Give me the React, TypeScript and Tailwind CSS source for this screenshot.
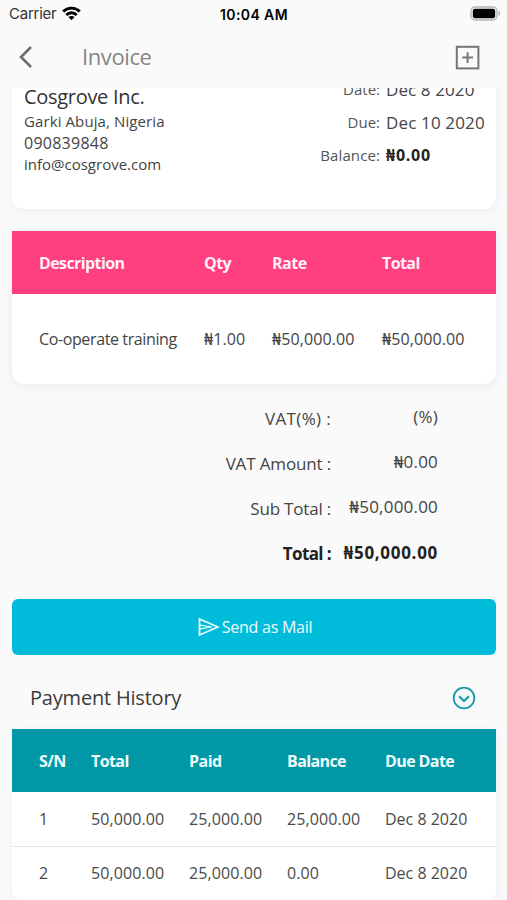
const items = [
  { description: "Co-operate training", qty: "₦1.00", rate: "₦50,000.00", total: "₦50,000.00" },
];

const summary = [
  { label: "VAT(%) :", value: "(%)", labelClass: "tracking-[0.35px]" },
  { label: "VAT Amount :", value: "₦0.00", labelClass: "tracking-[-0.15px]" },
  { label: "Sub Total :", value: "₦50,000.00", labelClass: "tracking-[-0.2px]" },
];

const payments = [
  { sn: 1, total: "50,000.00", paid: "25,000.00", balance: "25,000.00", due: "Dec 8 2020" },
  { sn: 2, total: "50,000.00", paid: "25,000.00", balance: "0.00", due: "Dec 8 2020" },
];

function StatusBar() {
  return (
    <div className="flex h-7 items-center justify-between pl-[9px] pr-[6px] font-['Inter',sans-serif] text-black">
      <div className="flex w-[120px] items-center gap-[6px]">
        <span className="text-[15px] tracking-[-0.25px] text-[#333]">Carrier</span>
        <svg className="-mt-[2px]" width="19" height="15" viewBox="0 0 19 15" fill="none" stroke="#000" strokeWidth="2.8">
          <path d="M1.2 5.6C5.8 0.9 13.2 0.9 17.8 5.6" />
          <path d="M4.3 8.9C7.2 6 11.8 6 14.7 8.9" />
          <path d="M9.5 14.2L6.4 11.1C8.1 9.5 10.9 9.5 12.6 11.1Z" fill="#000" stroke="none" />
        </svg>
      </div>
      <span className="mr-[2px] text-[14px] font-semibold tracking-[0.4px]">10:04 AM</span>
      <div className="flex w-[120px] justify-end pb-[2px]">
        <svg width="31" height="15" viewBox="0 0 31 15" fill="none">
          <rect x="1" y="1" width="26" height="13" rx="4" stroke="#b5b5b5" strokeWidth="1.4" />
          <rect x="2.8" y="2.8" width="22.4" height="9.4" rx="2" fill="#000" />
          <path d="M28.7 5.3C30.8 6 30.8 9 28.7 9.7Z" fill="#aaa" />
        </svg>
      </div>
    </div>
  );
}

function Header() {
  return (
    <header className="flex h-[60px] items-center pb-[2px] pl-[18px] pr-[27px] text-[#858585]">
      <svg width="16" height="24" viewBox="0 0 16 24" fill="none" stroke="#6e6e6e" strokeWidth="2.6">
        <path d="M13 2L3 12L13 22" />
      </svg>
      <h1 className="ml-12 flex-1 pb-[2px] text-[22px] leading-none tracking-[-0.4px]">Invoice</h1>
      <svg width="25" height="25" viewBox="0 0 25 25" fill="none" stroke="#757575" strokeWidth="2">
        <rect x="1.8" y="1.8" width="21.6" height="21.6" />
        <path d="M12.6 7.2V18M7.2 12.6H18" />
      </svg>
    </header>
  );
}

function ClientCard() {
  return (
    <section className="-mt-10 flex h-[161px] justify-between rounded-xl bg-white px-3 shadow-[0_2px_10px_rgba(90,120,140,0.09)]">
      <div className="pt-[34px] text-[15px] leading-[21px] text-[#444]">
        <h2 className="text-[20px] leading-[29px] tracking-[-0.3px] text-[#333]">Cosgrove Inc.</h2>
        <p className="tracking-[0.1px]">Garki Abuja, Nigeria</p>
        <p className="pt-px text-[16px] tracking-[0.25px]">090839848</p>
        <p>info@cosgrove.com</p>
      </div>
      <dl className="grid grid-cols-[auto_98px] content-start gap-x-[6px] pt-[25px] text-right leading-[33px]">
        <dt className="text-[15px] text-[#555]">Date:</dt>
        <dd className="text-left text-[17px] tracking-[0.1px] text-[#444]">Dec 8 2020</dd>
        <dt className="text-[15px] text-[#555]">Due:</dt>
        <dd className="text-left text-[17px] tracking-[0.15px] text-[#444]">Dec 10 2020</dd>
        <dt className="text-[15px] tracking-[0.1px] text-[#555]">Balance:</dt>
        <dd className="text-left text-[16px] font-bold tracking-[0.75px] text-[#222]">₦0.00</dd>
      </dl>
    </section>
  );
}

function ItemsTable() {
  return (
    <section className="mt-[22px] overflow-hidden rounded-b-xl bg-white text-[16px] shadow-[0_2px_10px_rgba(90,120,140,0.11)]">
      <div className="grid h-[63px] grid-cols-[165px_68px_110px_1fr] items-center bg-[#ff3f80] pl-[27px] font-bold tracking-[-0.6px] text-[#fff0f5]">
        <span>Description</span>
        <span>Qty</span>
        <span className="tracking-[-0.5px]">Rate</span>
        <span>Total</span>
      </div>
      {items.map((item) => (
        <div
          key={item.description}
          className="grid h-[90px] grid-cols-[165px_68px_110px_1fr] items-center pl-[27px] tracking-[0.1px] text-[#444]"
        >
          <span className="tracking-[-0.38px]">{item.description}</span>
          <span>{item.qty}</span>
          <span>{item.rate}</span>
          <span>{item.total}</span>
        </div>
      ))}
    </section>
  );
}

function Summary() {
  return (
    <section className="mt-[11px] pr-[58px] text-[17px] text-[#444]">
      {summary.map((row) => (
        <div key={row.label} className="flex h-[45px] items-center justify-end">
          <span className={`pt-[2px] ${row.labelClass}`}>{row.label}</span>
          <span className="w-[107px] pb-px text-right tracking-[0.2px]">{row.value}</span>
        </div>
      ))}
      <div className="flex h-[45px] items-center justify-end font-bold text-[#222]">
        <span className="pt-[2px] tracking-[-0.6px]">Total :</span>
        <span className="w-[107px] text-right tracking-[0.7px]">₦50,000.00</span>
      </div>
    </section>
  );
}

function PaymentHistory() {
  return (
    <section>
      <div className="flex h-[74px] items-center justify-between pb-[1px] pl-[18px] pr-5 pt-[12px]">
        <h2 className="text-[20px] tracking-[-0.2px] text-[#3c3c3c]">Payment History</h2>
        <svg width="24" height="24" viewBox="0 0 24 24" fill="none" stroke="#1398aa" strokeWidth="1.8">
          <circle cx="12" cy="12" r="10.3" />
          <path d="M7 10.2L12 15L17 10.2" strokeWidth="2" />
        </svg>
      </div>
      <div className="overflow-hidden rounded-b-xl bg-white text-[16px] shadow-[0_2px_10px_rgba(90,120,140,0.09)]">
        <div className="grid h-[63px] grid-cols-[52px_98px_98px_98px_1fr] items-center bg-[#0097a7] pl-[27px] font-bold tracking-[-0.6px] text-[#effcfd]">
          <span>S/N</span>
          <span>Total</span>
          <span className="tracking-[-0.5px]">Paid</span>
          <span>Balance</span>
          <span>Due Date</span>
        </div>
        {payments.map((payment) => (
          <div
            key={payment.sn}
            className="grid h-[55px] grid-cols-[52px_98px_98px_98px_1fr] items-center border-b border-[#e4e4e4] pl-[27px] tracking-[0.1px] text-[#4a4a4a] last:border-b-0 last:pb-[3px]"
          >
            <span>{payment.sn}</span>
            <span>{payment.total}</span>
            <span>{payment.paid}</span>
            <span>{payment.balance}</span>
            <span className="tracking-normal">{payment.due}</span>
          </div>
        ))}
      </div>
    </section>
  );
}

export default function App() {
  return (
    <div className="flex h-[900px] w-[507px] flex-col overflow-hidden bg-[#fafafa] font-['Open_Sans','Noto_Sans',sans-serif] whitespace-nowrap">
      <StatusBar />
      <Header />
      {/* Scrolled content, cut off at the header */}
      <main className="flex-1 overflow-hidden pl-3 pr-[11px]">
        <ClientCard />
        <ItemsTable />
        <Summary />
        <button className="mt-6 flex h-14 w-full items-center justify-center gap-[2px] rounded-md bg-[#00bcda] pl-[2px] text-[16px] tracking-[-0.25px] text-[#effcff]">
          <svg width="22" height="20" viewBox="0 0 22 20" fill="none" stroke="#effcff" strokeWidth="1.8">
            <path d="M1.5 2L20 10L1.5 18V2Z" />
            <path d="M2 8.2L14 10L2 11.8" strokeWidth="1.2" />
          </svg>
          Send as Mail
        </button>
        <PaymentHistory />
      </main>
    </div>
  );
}
